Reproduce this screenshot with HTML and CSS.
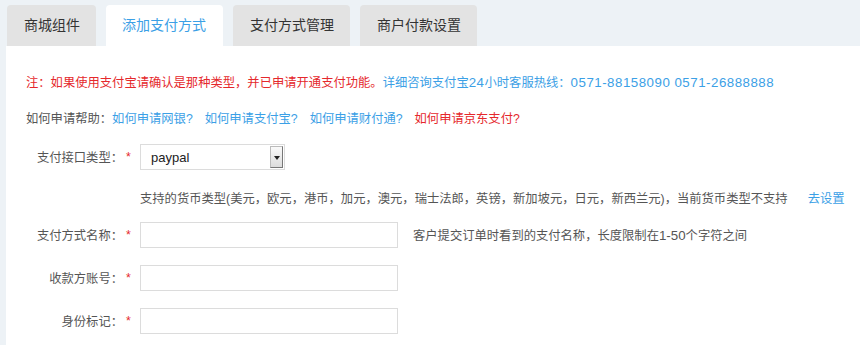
FILE: index.html
```html
<!DOCTYPE html>
<html lang="zh-CN">
<head>
    <meta charset="UTF-8">
    <title>添加支付方式</title>
    <link rel="stylesheet" href="styles.css">
</head>
<body>
    <div class="tabs">
        <div class="tab">商城组件</div>
        <div class="tab active">添加支付方式</div>
        <div class="tab">支付方式管理</div>
        <div class="tab">商户付款设置</div>
    </div>
    <div class="panel">
        <p class="notice">注：如果使用支付宝请确认是那种类型，并已申请开通支付功能。<span class="blue">详细咨询支付宝<span class="en">24</span>小时客服热线：<span class="en">0571-88158090 0571-26888888</span></span></p>
        <p class="help">如何申请帮助：<a href="#">如何申请网银?</a><a href="#">如何申请支付宝?</a><a href="#">如何申请财付通?</a><a href="#" class="red">如何申请京东支付?</a></p>

        <div class="row">
            <label>支付接口类型：</label>
            <span class="req">*</span>
            <div class="select">
                <span class="select-text">paypal</span>
                <span class="select-btn"></span>
            </div>
        </div>
        <div class="currency">支持的货币类型(美元，欧元，港币，加元，澳元，瑞士法郎，英镑，新加坡元，日元，新西兰元)，当前货币类型不支持<a href="#">去设置</a></div>

        <div class="row">
            <label>支付方式名称：</label>
            <span class="req">*</span>
            <input type="text">
            <span class="hint">客户提交订单时看到的支付名称，长度限制在<span class="en">1-50</span>个字符之间</span>
        </div>
        <div class="row">
            <label>收款方账号：</label>
            <span class="req">*</span>
            <input type="text">
        </div>
        <div class="row">
            <label>身份标记：</label>
            <span class="req">*</span>
            <input type="text">
        </div>
    </div>
</body>
</html>
```

FILE: styles.css
```css
body {
    margin: 0;
    padding: 0;
    background: #edf2f6;
    font-family: "Liberation Sans", "Noto Sans CJK SC", sans-serif;
    color: #555;
    font-size: 12.3px;
}
.en {
    font-size: 13.3px;
    line-height: 10px;
}
.notice .en {
    letter-spacing: 0.5px;
}
.tabs {
    display: flex;
    gap: 10px;
    padding: 5px 0 0 7px;
    height: 41px;
}
.tab {
    background: #e3e3e3;
    color: #333;
    font-size: 14px;
    padding: 0 16px 0 17px;
    line-height: 41px;
    border-radius: 4px 4px 0 0;
}
.tab.active {
    background: #fff;
    color: #3ba0e6;
    padding: 0 17px 0 16px;
}
.panel {
    background: #fff;
    margin-left: 6px;
    padding: 27px 0 20px 20px;
    height: 300px;
    box-sizing: border-box;
}
p {
    margin: 0;
    line-height: 20px;
}
.notice {
    color: #e5282c;
}
.blue {
    color: #3ba0e6;
}
.help {
    margin-top: 16px;
}
a {
    color: #3ba0e6;
    text-decoration: none;
    margin-right: 12px;
}
a.red {
    color: #e5282c;
}
.row {
    display: flex;
    align-items: center;
    margin-left: -20px;
    height: 26px;
    margin-bottom: 17px;
}
.help + .row {
    margin-top: 15px;
    margin-bottom: 0;
}
label {
    width: 117px;
    text-align: right;
    color: #555;
}
.req {
    width: 17px;
    color: #e5282c;
    padding-left: 3px;
    box-sizing: border-box;
    line-height: 10px;
}
input {
    width: 258px;
    height: 26px;
    box-sizing: border-box;
    border: 1px solid #dcdcdc;
    margin: 0;
    padding: 0 6px;
}
.select {
    position: relative;
    width: 145px;
    height: 26px;
    border: 1px solid #dcdcdc;
    box-sizing: border-box;
    display: flex;
    align-items: center;
}
.select-text {
    font-size: 13px;
    color: #222;
    padding-left: 10px;
}
.select-btn {
    position: absolute;
    right: 1px;
    top: 1px;
    width: 13px;
    height: 22px;
    background: linear-gradient(#fafafa, #dcdcdc);
    border: 1px solid #bbb;
    border-bottom-color: #777;
    border-right-color: #777;
    box-sizing: border-box;
}
.select-btn::after {
    content: "";
    position: absolute;
    left: 3px;
    top: 9px;
    border-left: 3px solid transparent;
    border-right: 3px solid transparent;
    border-top: 4px solid #222;
}
.currency {
    padding-left: 114px;
    line-height: 20px;
    margin: 19px 0 13px;
}
.currency a {
    margin-left: 20px;
}
.hint {
    margin-left: 15px;
}
```
